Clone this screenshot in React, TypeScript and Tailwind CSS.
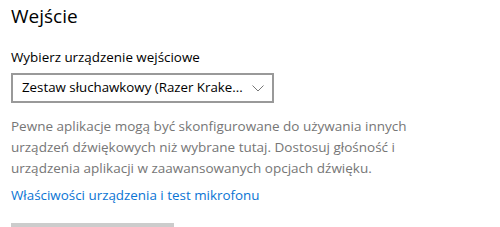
export default function App() {
  return (
    <div
      className="h-[227px] w-[500px] overflow-hidden bg-white pl-[11px] text-black"
      style={{ fontFamily: '"Open Sans", "Noto Sans", sans-serif' }}
    >
      <h1 className="pt-[2px] text-[19px] leading-[28px] font-normal">Wejście</h1>

      <div className="mt-[17px] text-[13.4px] leading-[20px]">Wybierz urządzenie wejściowe</div>

      <button
        type="button"
        className="mt-[6px] flex h-[30px] w-[263px] items-center justify-between border-2 border-[#999999] pr-[8px] pl-[9px] text-[13.3px]"
      >
        <span className="whitespace-nowrap">Zestaw słuchawkowy (Razer Krake...</span>
        <svg width="12" height="7" viewBox="0 0 12 7" fill="none" className="shrink-0">
          <path d="M0.5 0.5l5.5 5.5 5.5-5.5" stroke="#777777" strokeWidth="1" />
        </svg>
      </button>

      <p className="mt-[13px] w-[430px] text-[13.5px] leading-[21px] text-[#767676]">
        Pewne aplikacje mogą być skonfigurowane do używania innych urządzeń dźwiękowych niż
        wybrane tutaj. Dostosuj głośność i urządzenia aplikacji w zaawansowanych opcjach dźwięku.
      </p>

      <a href="#" className="mt-[6px] block text-[13.4px] leading-[21px] text-[#0a74d4]">
        Właściwości urządzenia i test mikrofonu
      </a>

      <div className="mt-[17px] h-[10px] w-[163px] bg-[#cccccc]" />
    </div>
  );
}
